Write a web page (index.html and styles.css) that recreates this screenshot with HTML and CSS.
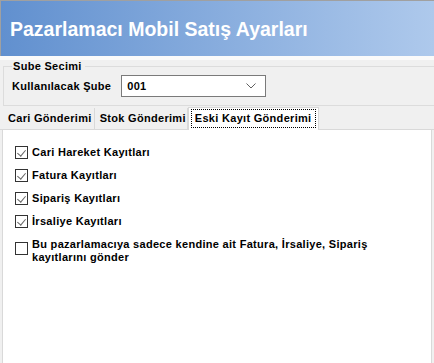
FILE: index.html
```html
<!DOCTYPE html>
<html>
<head lang="tr">
    <meta charset="UTF-8">
    <title>Pazarlamacı Mobil Satış Ayarları</title>
    <link rel="stylesheet" href="styles.css">
</head>
<body>

<div id="header">
    <h1>Pazarlamacı Mobil Satış Ayarları</h1>
</div>

<div id="settings">
    <fieldset class="group">
        <legend>Sube Secimi</legend>
        <div class="row">
            <label>Kullanılacak Şube</label>
            <div class="combo">
                <span>001</span>
                <svg width="10" height="6" viewBox="0 0 10 6"><path d="M0.5 0.5 L5 5 L9.5 0.5" fill="none" stroke="#606060" stroke-width="1"/></svg>
            </div>
        </div>
    </fieldset>
</div>

<ul id="tab">
    <li>Cari Gönderimi</li>
    <li>Stok Gönderimi</li>
    <li class="selected"><span>Eski Kayıt Gönderimi</span></li>
</ul>

<div id="panel">
    <div class="check on"><i></i><span>Cari Hareket Kayıtları</span></div>
    <div class="check on"><i></i><span>Fatura Kayıtları</span></div>
    <div class="check on"><i></i><span>Sipariş Kayıtları</span></div>
    <div class="check on"><i></i><span>İrsaliye Kayıtları</span></div>
    <div class="check"><i></i><span>Bu pazarlamacıya sadece kendine ait Fatura, İrsaliye, Sipariş<br>kayıtlarını gönder</span></div>
</div>

</body>
</html>
```

FILE: styles.css
```css
* {
    margin: 0;
    padding: 0;
    box-sizing: border-box;
}

ul {
    list-style: none;
}

body {
    width: 434px;
    height: 363px;
    overflow: hidden;
    background: #f0f0f0;
    font-family: "Liberation Sans", Arial, sans-serif;
    font-size: 11px;
    font-weight: bold;
    letter-spacing: 0.3px;
    color: #000;
}

#header {
    height: 56px;
    border-top: 1px solid #a0a0a0;
    border-left: 1px solid #a0a0a0;
    background: linear-gradient(to right, #6190cf, #aec9ec);
    padding: 16px 0 0 9px;
}

#header h1 {
    font-size: 19.5px;
    line-height: 24px;
    letter-spacing: 0;
    color: #fff;
}

#settings {
    border-top: 4px solid #fafafa;
    height: 51px;
    padding: 0 0 0 3px;
}

.group {
    border: 1px solid #dcdcdc;
    border-right: none;
    height: 46px;
    padding: 0 0 0 8px;
}

.group legend {
    padding: 0 3px 0 1px;
    line-height: 13px;
}

.row {
    display: flex;
    align-items: center;
    gap: 10px;
    margin-top: 2px;
}

.combo {
    width: 145px;
    height: 22px;
    background: #fff;
    border: 1px solid #7a7a7a;
    display: flex;
    align-items: center;
    justify-content: space-between;
    padding: 0 9px 0 5px;
}

#tab {
    display: flex;
    height: 23px;
    padding: 1px 0 0 2px;
    border-bottom: 1px solid #d9d9d9;
}

#tab li {
    padding: 3px 2px 0 6px;
    border-right: 1px solid #d9d9d9;
    line-height: 15px;
}

#tab li:nth-child(2) {
    padding-left: 5px;
    padding-right: 1px;
}

#tab .selected {
    background: #fff;
    padding: 1px 2px 2px 2px;
    margin-top: -1px;
    margin-bottom: -1px;
    border: 1px solid #d9d9d9;
    border-bottom: none;
}

#tab .selected span {
    display: block;
    border: 1px dotted #000;
    padding: 1px 4px 1px 3px;
}

#panel {
    height: 234px;
    margin: 0 2px 0 2px;
    background: #fff;
    border-left: 1px solid #d9d9d9;
    border-right: 1px solid #d9d9d9;
    padding: 16px 0 0 12px;
    display: flex;
    flex-direction: column;
    gap: 10px;
}

.check {
    display: flex;
    align-items: flex-start;
    gap: 4px;
    line-height: 13px;
}

.check i {
    width: 13px;
    height: 13px;
    border: 1px solid #333;
    background: #fff;
    flex-shrink: 0;
    position: relative;
}

.check.on i::after {
    content: "";
    position: absolute;
    left: 3px;
    top: 1px;
    width: 4px;
    height: 7px;
    border: solid #666;
    border-width: 0 1px 1px 0;
    transform: rotate(40deg);
}

.check:last-child i {
    margin-top: 4px;
}
```
